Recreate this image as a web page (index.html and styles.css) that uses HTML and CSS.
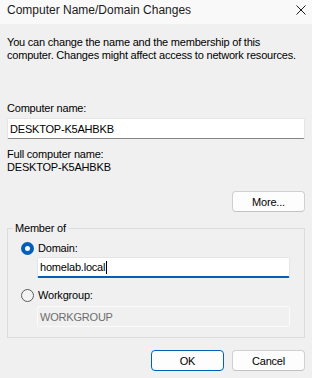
FILE: index.html
```html
<!DOCTYPE html>
<html lang="en">
 <head>
  <meta charset="UTF-8" />
  <meta name="viewport" content="width=device-width, initial-scale=1.0" />
  <title>Computer Name/Domain Changes</title>
  <link rel="stylesheet" href="styles.css">
 </head>
 <body>
  <div class="dialog">
   <div class="titlebar">
    <span class="title">Computer Name/Domain Changes</span>
    <svg class="close" width="10" height="10" viewBox="0 0 10 10">
     <path d="M0.5 0.5 L9.5 9.5 M9.5 0.5 L0.5 9.5" stroke="#1a1a1a" stroke-width="1" fill="none" />
    </svg>
   </div>

   <div class="content">
    <p class="intro">You can change the name and the membership of this computer. Changes might affect access to network resources.</p>

    <label class="label name-label">Computer name:</label>
    <div class="field">DESKTOP-K5AHBKB</div>

    <div class="label full-label">Full computer name:</div>
    <div class="label">DESKTOP-K5AHBKB</div>

    <div class="more-row">
     <button class="btn">More...</button>
    </div>

    <fieldset class="member">
     <legend>Member of</legend>
     <div class="option">
      <span class="radio checked"></span>
      <span>Domain:</span>
     </div>
     <div class="field focused">homelab.local<span class="caret"></span></div>
     <div class="option workgroup">
      <span class="radio"></span>
      <span>Workgroup:</span>
     </div>
     <div class="field disabled">WORKGROUP</div>
    </fieldset>

    <div class="actions">
     <button class="btn default">OK</button>
     <button class="btn">Cancel</button>
    </div>
   </div>
  </div>
 </body>
</html>
```

FILE: styles.css
```css
body {
 margin: 0;
 background-color: #f0f0f0;
 font-family: "Liberation Sans", Arial, sans-serif;
 font-size: 11px;
 letter-spacing: -0.2px;
 color: #000;
}

.dialog {
 width: 312px;
 height: 378px;
 overflow: hidden;
}

.titlebar {
 height: 24px;
 background-color: #f9f9f9;
 display: flex;
 align-items: center;
 justify-content: space-between;
 padding: 0 6px 4px 7px;
 box-sizing: border-box;
}

.title {
 font-size: 12px;
 letter-spacing: 0;
 color: #1a1a1a;
}

.content {
 padding: 0 7px;
 display: flex;
 flex-direction: column;
}

.intro {
 margin: 12px 0 0;
 line-height: 13px;
}

.label {
 display: block;
 line-height: 13px;
}

.name-label {
 margin-top: 40px;
}

.field {
 height: 21px;
 box-sizing: border-box;
 background: #fff;
 border: 1px solid #e5e5e5;
 border-bottom-color: #868686;
 border-radius: 2px;
 padding: 0 2px;
 display: flex;
 align-items: center;
 margin-top: 3px;
}

.full-label {
 margin-top: 9px;
}

.more-row {
 display: flex;
 justify-content: flex-end;
 margin-top: 17px;
}

.btn {
 width: 73px;
 height: 21px;
 padding: 0;
 font-family: inherit;
 font-size: 11px;
 letter-spacing: -0.2px;
 color: #000;
 background-color: #fdfdfd;
 border: 1px solid #d0d0d0;
 border-bottom-color: #c2c2c2;
 border-radius: 4px;
}

.btn.default {
 border-color: #005fb8;
}

.member {
 margin: 10px 0 0;
 padding: 6px 13px 11px 13px;
 border: 1px solid #dcdcdc;
 height: 116px;
 box-sizing: border-box;
}

.member legend {
 margin-left: -8px;
 padding: 0 2px;
 line-height: 13px;
}

.option {
 display: flex;
 align-items: center;
 gap: 4px;
 height: 14px;
}

.workgroup {
 margin-top: 10px;
}

.radio {
 width: 13px;
 height: 13px;
 box-sizing: border-box;
 border-radius: 50%;
 border: 1px solid #5b5b5b;
 background: #f3f3f3;
}

.radio.checked {
 border: 4px solid #005fb8;
 background: #fff;
}

.member .field {
 margin-left: 16px;
 margin-right: 1px;
}

.field.focused {
 border-bottom: 2px solid #005fb8;
 margin-top: 2px;
}

.caret {
 width: 1px;
 height: 13px;
 background: #000;
 margin-left: 1px;
}

.field.disabled {
 background: #f0f0f0;
 border: 1px solid #fafafa;
 color: #6d6d6d;
 margin-top: 4px;
}

.actions {
 display: flex;
 justify-content: flex-end;
 gap: 8px;
 margin-top: 12px;
}
```
